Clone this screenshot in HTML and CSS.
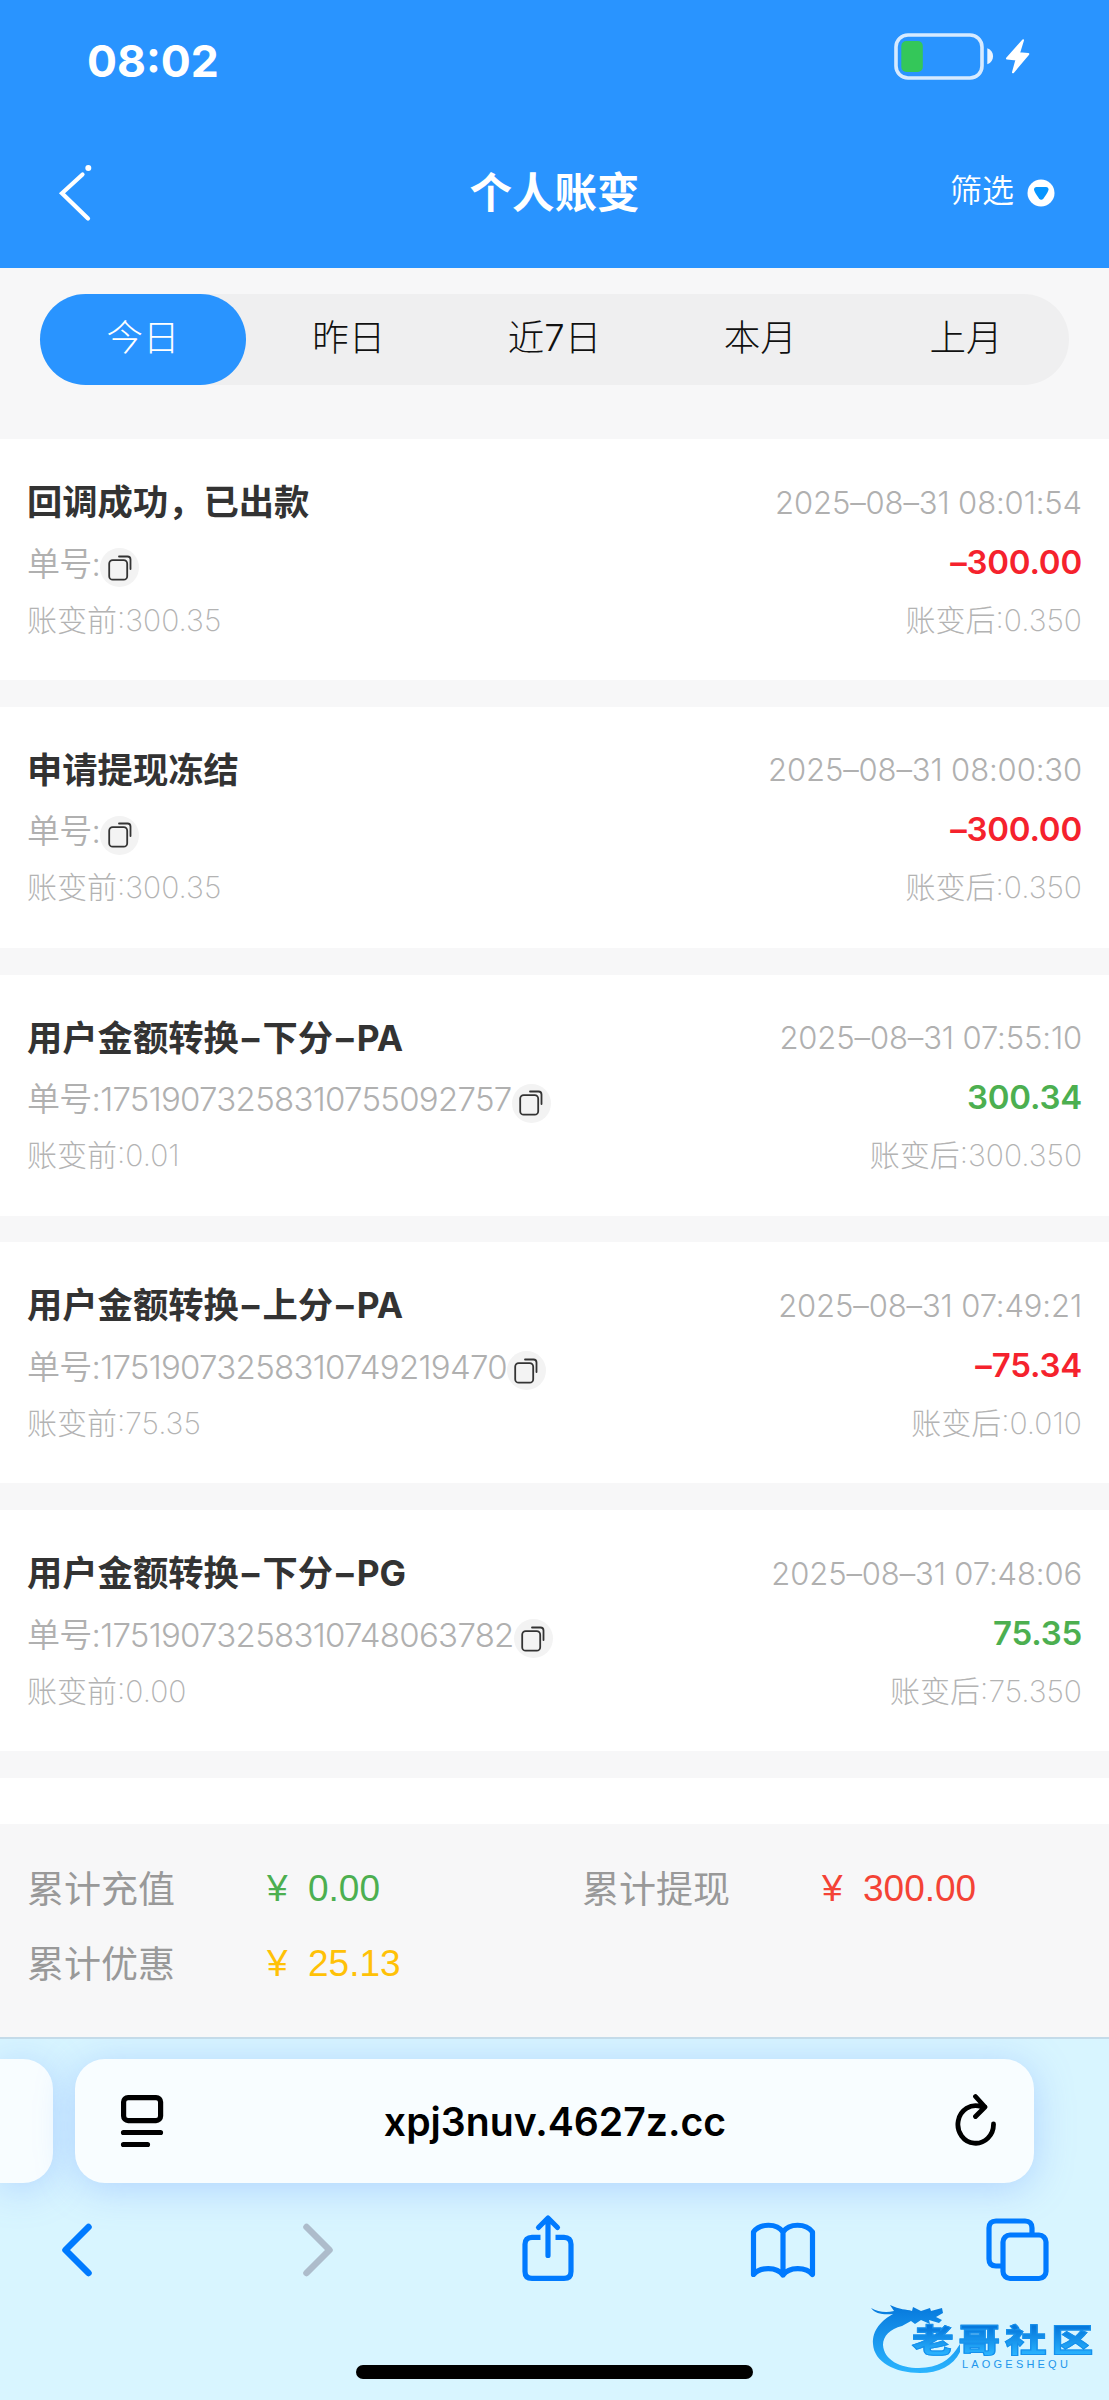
FILE: index.html
```html
<!DOCTYPE html>
<html lang="zh-CN">
<head>
<meta charset="utf-8">
<title>个人账变</title>
<link rel="stylesheet" href="styles.css">
</head>
<body>
<div class="screen">
  <header class="top">
    <div class="status">
      <span class="clock">08:02</span>
      <svg class="battery" width="138" height="50" viewBox="0 0 138 50">
        <rect x="2" y="2" width="86" height="43" rx="12" fill="none" stroke="#d6eaff" stroke-width="3.600"/>
        <rect x="7.300" y="8" width="21.500" height="31" rx="5" fill="#34c759"/>
        <path d="M93.300 15.300C101 18 101 28.600 93.300 31.300z" fill="#eaf4ff"/>
        <path d="M129 7.300 113 25.500 122.500 26.500 119 39.300 134.300 21 125 20.300z" fill="#fff" stroke="#fff" stroke-width="2" stroke-linejoin="round"/>
      </svg>
    </div>
    <nav class="titlebar">
      <svg class="back" width="40" height="64" viewBox="0 0 40 64"><path d="M28.500 13.500 8 32.300 34 57.500" fill="none" stroke="#fff" stroke-width="4.200" stroke-linecap="round"/><circle cx="34.300" cy="7" r="3" fill="#fff"/></svg>
      <h1>个人账变</h1>
      <div class="filter"><span>筛选</span>
        <svg width="28" height="28" viewBox="0 0 28 28"><circle cx="14" cy="14" r="13.500" fill="#fff"/><path d="M7 10.500q0-2.500 2.500-2.500h9.500q2.500 0 2.500 2.500 0 2-5 9-2.200 2.500-4.500 0-5-7-5-9z" fill="#0795ff"/></svg>
      </div>
    </nav>
  </header>

  <div class="tabs">
    <span class="tab active">今日</span><span class="tab">昨日</span><span class="tab">近7日</span><span class="tab">本月</span><span class="tab">上月</span>
  </div>

  <main class="list">
    <article class="card">
      <div class="row r1"><b>回调成功，已出款</b><time>2025–08–31 08:01:54</time></div>
      <div class="row r2"><span class="order">单号:<i class="copy"><svg width="24" height="26" viewBox="0 0 24 26"><use href="#copy"/></svg></i></span><strong class="neg">–300.00</strong></div>
      <div class="row r3"><span>账变前:300.35</span><span>账变后:0.350</span></div>
    </article>
    <article class="card">
      <div class="row r1"><b>申请提现冻结</b><time>2025–08–31 08:00:30</time></div>
      <div class="row r2"><span class="order">单号:<i class="copy"><svg width="24" height="26" viewBox="0 0 24 26"><use href="#copy"/></svg></i></span><strong class="neg">–300.00</strong></div>
      <div class="row r3"><span>账变前:300.35</span><span>账变后:0.350</span></div>
    </article>
    <article class="card">
      <div class="row r1"><b>用户金额转换<span class="dash">–</span>下分<span class="dash">–</span>PA</b><time>2025–08–31 07:55:10</time></div>
      <div class="row r2"><span class="order">单号:17519073258310755092757<i class="copy"><svg width="24" height="26" viewBox="0 0 24 26"><use href="#copy"/></svg></i></span><strong class="pos">300.34</strong></div>
      <div class="row r3"><span>账变前:0.01</span><span>账变后:300.350</span></div>
    </article>
    <article class="card">
      <div class="row r1"><b>用户金额转换<span class="dash">–</span>上分<span class="dash">–</span>PA</b><time>2025–08–31 07:49:21</time></div>
      <div class="row r2"><span class="order">单号:17519073258310749219470<i class="copy"><svg width="24" height="26" viewBox="0 0 24 26"><use href="#copy"/></svg></i></span><strong class="neg">–75.34</strong></div>
      <div class="row r3"><span>账变前:75.35</span><span>账变后:0.010</span></div>
    </article>
    <article class="card">
      <div class="row r1"><b>用户金额转换<span class="dash">–</span>下分<span class="dash">–</span>PG</b><time>2025–08–31 07:48:06</time></div>
      <div class="row r2"><span class="order">单号:17519073258310748063782<i class="copy"><svg width="24" height="26" viewBox="0 0 24 26"><use href="#copy"/></svg></i></span><strong class="pos">75.35</strong></div>
      <div class="row r3"><span>账变前:0.00</span><span>账变后:75.350</span></div>
    </article>
    <article class="card"></article>
  </main>

  <section class="totals">
    <div><span>累计充值</span><em class="green"><i>¥</i>0.00</em></div>
    <div><span>累计提现</span><em class="red"><i>¥</i>300.00</em></div>
    <div><span>累计优惠</span><em class="yellow"><i>¥</i>25.13</em></div>
  </section>

  <footer class="browser">
    <div class="address-row">
      <div class="prev-tab"></div>
      <div class="address">
        <svg width="44" height="54" viewBox="0 0 44 54" fill="none" stroke="#000" stroke-width="5.200" stroke-linecap="round"><rect x="3.600" y="3.600" width="37" height="23" rx="4.500"/><path d="M3.500 38.500h37M3.500 50.500h24"/></svg>
        <span>xpj3nuv.4627z.cc</span>
        <svg class="reload" width="42" height="54" viewBox="0 0 42 54" fill="none" stroke="#000" stroke-width="4.800" stroke-linecap="round" stroke-linejoin="round"><path d="M38.500 31A17.800 18.800 0 1 1 26 13.500L30 14M20.500 3.500 30 14 20.500 23.500"/></svg>
      </div>
    </div>
    <div class="tools">
      <svg width="32" height="56" viewBox="0 0 32 56" fill="none" stroke="#007aff" stroke-width="6.500" stroke-linecap="round" stroke-linejoin="round"><path d="M27.500 5 4.500 28l23 23"/></svg>
      <svg class="forward" width="32" height="56" viewBox="0 0 32 56" fill="none" stroke="#adbccb" stroke-width="6.500" stroke-linecap="round" stroke-linejoin="round"><path d="M4.500 5 27.500 28 4.500 51"/></svg>
      <svg class="share" width="54" height="68" viewBox="0 0 54 68" fill="none" stroke="#007aff" stroke-width="5.200" stroke-linejoin="round"><path d="M19.500 23.300H11Q4 23.300 4 30.300V57.400q0 7 7 7h32q7 0 7-7V30.300q0-7-7-7H34.500"/><path stroke-linecap="round" d="M27 41.500V4.500M17.500 13.500 27 4 36.500 13.500"/></svg>
      <svg class="book" width="66" height="60" viewBox="0 0 66 60" fill="none" stroke="#007aff" stroke-width="5.200" stroke-linecap="round" stroke-linejoin="round"><path d="M33 12C27 3 10 3 3.500 12V54.500C10 46.500 27 46.500 33 55 39 46.500 56 46.500 62.500 54.500V12C56 3 39 3 33 12V55"/></svg>
      <svg class="windows" width="63" height="66" viewBox="0 0 63 66" fill="none" stroke="#007aff" stroke-width="5.200"><path d="M46 18V12Q46 5 39 5H10Q3 5 3 12V43q0 7 7 7h7"/><rect x="17" y="19" width="43" height="43.500" rx="7"/></svg>
    </div>
    <div class="home"></div>
    <div class="mark">
      <svg width="94" height="78" viewBox="0 0 94 78"><defs><linearGradient id="ring" x2="0" y2="1"><stop offset="0" stop-color="#0678dc"/><stop offset="1" stop-color="#2bb5ff"/></linearGradient></defs>
        <path fill="url(#ring)" d="M1 8C8 12 16 13 24 11L20 5C30 10 36 9 42 11L43 7 51 11 60 8 61 11 72 8 73 13 66 17 72 20 69 23 59 20 60 24 51 20 45 24 41 21 32 26C20 29 13 36 13 45 14 60 30 68 49 68 68 68 80 59 86 50L90 44V52C83 66 69 73 50 73 25 73 4 62 3 44 2 30 12 20 23 14 14 15 5 14 1 8Z"/></svg>
      <span class="mark-name">老哥社区</span><span class="mark-latin">LAOGESHEQU</span>
    </div>
  </footer>
</div>
<svg class="defs" width="0" height="0"><symbol id="copy" viewBox="0 0 24 26"><rect x="1.200" y="5.200" width="18" height="19.500" rx="3.500" fill="none" stroke="#333" stroke-width="1.800"/><path d="M11 1.500h8.500q3 0 3 3V14" fill="none" stroke="#333" stroke-width="1.800" stroke-linecap="round"/></symbol></svg>
</body>
</html>
```
FILE: styles.css
```css
* { box-sizing: border-box; }
body { margin: 0; background: #f7f7f8; font-family: Inter, "Noto Sans CJK SC", sans-serif; }
.defs { position: absolute; }
.screen { width: 1109px; height: 2400px; display: flex; flex-direction: column; overflow: hidden; }
.screen svg { display: block; flex: none; }

.top { height: 268px; flex: none; background: #2994ff; color: #fff; }
.status { height: 118px; padding: 0 76px 0 87px; display: flex; align-items: center; justify-content: space-between; }
.clock { font: 700 44.500px/50px Inter, sans-serif; padding-top: 3px; }
.battery { margin: 0 1px 3px 0; }
.titlebar { height: 150px; padding: 0 54px; display: grid; grid-template-columns: 1fr auto 1fr; align-items: center; }
h1 { margin: 0; font-size: 42.500px; font-weight: 700; line-height: 60px; }
.filter { justify-self: end; display: flex; align-items: center; gap: 13px; font-size: 32px; font-weight: 350; line-height: 40px; }
.filter span { padding-bottom: 4px; }
.filter svg { margin-bottom: 1px; }

.tabs { flex: none; height: 91px; margin: 26px 40px 54px; border-radius: 46px; background: #efeff0; display: flex; }
.tab { flex: 1; border-radius: 46px; text-align: center; font-size: 36.500px; line-height: 89px; font-weight: 300; color: #111; }
.tab.active { background: #2994ff; color: #fff; }

.list { height: 1385px; flex: none; overflow: hidden; display: flex; flex-direction: column; gap: 26.800px; }
.card { height: 241px; flex: none; background: #fff; padding: 34px 27px 0; }
.row { display: flex; justify-content: space-between; align-items: center; white-space: nowrap; }
.r1 { height: 58px; }
.r1 b { font-size: 35.300px; color: #333; font-weight: 700; padding-bottom: 5px; }
.dash { padding: 0 3px; }
.r1 time { font-size: 31px; letter-spacing: -0.120px; color: #b0b0b0; font-weight: 350; }
.r2 { height: 61px; font-size: 33px; color: #b0b0b0; }
.order { display: flex; align-items: center; font-weight: 350; letter-spacing: -0.720px; }
.copy { width: 39px; height: 39px; border-radius: 50%; background: #f3f3f3; display: flex; align-items: center; justify-content: center; position: relative; top: 6px; }
.r2 strong { font-weight: 600; letter-spacing: -0.200px; }
.r3 { height: 51px; font-size: 30px; color: #b3b3b3; font-weight: 250; }
.neg { color: #f5222d; }
.pos { color: #4caf50; }

.totals { height: 213px; flex: none; padding: 26px 27px 0; display: grid; grid-template-columns: 555px 1fr; grid-auto-rows: 75px; font-size: 37px; color: #999; }
.totals div { display: flex; align-items: center; }
.totals span { width: 240px; padding-bottom: 2px; }
.totals em { font-style: normal; font-family: "Liberation Sans", sans-serif; padding-top: 3px; }
.totals i { font-style: normal; display: inline-block; width: 41px; }
.green { color: #4caf50; }
.red { color: #f44336; }
.yellow { color: #ffc107; }

.browser { position: relative; height: 363px; flex: none; background: #d8f5ff; border-top: 2px solid #c4dbe9; overflow: hidden; }
.address-row { display: flex; gap: 22px; padding-top: 20px; }
.prev-tab { width: 53px; height: 124px; border-radius: 0 30px 30px 0; background: #f8fdff; box-shadow: 0 5px 38px #a5cbffcc; }
.address { width: 959px; height: 124px; border-radius: 30px; background: #f8fdff; box-shadow: 0 5px 38px #a5cbffcc; padding: 0 37px 0 45px; display: flex; align-items: center; justify-content: space-between; }
.address span { font-size: 39.200px; font-weight: 600; color: #000; margin-right: 9px; }
.reload { margin-bottom: 3px; }
.tools { height: 134px; padding-left: 61px; display: flex; align-items: center; }
.forward { margin-left: 209px; }
.share { margin: 0 0 4px 187px; }
.book { margin-left: 175px; }
.windows { margin: 0 0 2px 170px; }
.home { width: 397px; height: 14px; border-radius: 7px; background: #000; margin: 48px auto 0; }
.mark { position: absolute; left: 870px; top: 261px; width: 225px; height: 84px; }
.mark-name { position: absolute; left: 42px; top: 24px; font-size: 32px; line-height: 33px; letter-spacing: 3.800px; font-weight: 900; white-space: nowrap; transform: scaleX(1.300); transform-origin: left; color: transparent; background: linear-gradient(#0678dc 10%, #2bb5ff 95%); background-clip: text; -webkit-background-clip: text; -webkit-text-stroke: 1px #1690ec; }
.mark-latin { position: absolute; left: 92px; top: 58px; font: 400 11px/12px "Liberation Sans", sans-serif; letter-spacing: 3.200px; color: #2196ec; }
```
